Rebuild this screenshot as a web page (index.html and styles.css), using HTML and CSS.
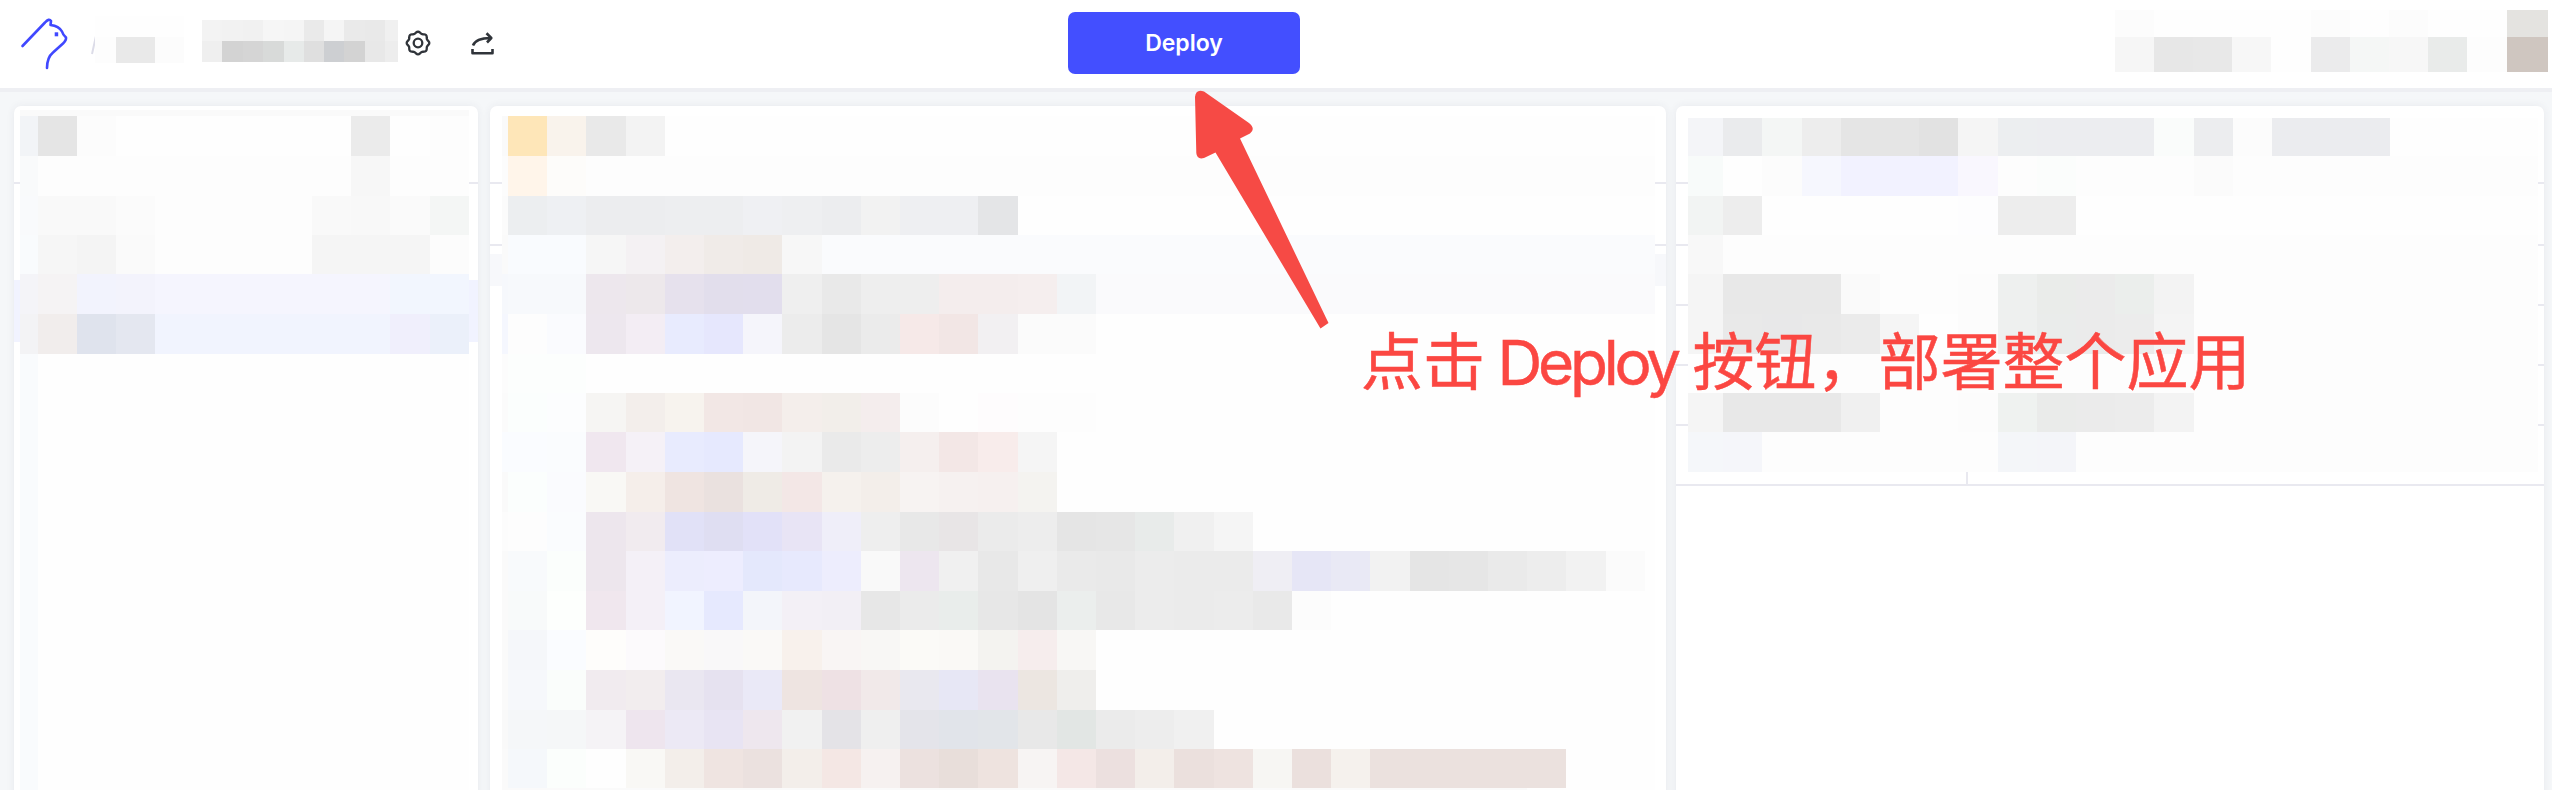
FILE: index.html
```html
<!DOCTYPE html>
<html lang="zh">
<head>
<meta charset="utf-8">
<title>Deploy</title>
<link rel="stylesheet" href="styles.css">
</head>
<body>
<div class="app">
  <header class="topbar">
    <div class="topbar-left">
      <svg class="logo" width="48" height="54" viewBox="20 17 48 54"><path d="M22.5 46 45 22.5Q49 18 51 21L50.5 25Q59 26 62 31.500Q63 35 66 37.500Q66.500 40 63 43.500L53 52.500Q47 57.500 47 68"/><rect x="54.700" y="32.300" width="3.500" height="4"/></svg>
      <svg class="slash" width="8" height="22" viewBox="0 0 8 22"><path d="M6 1 2 19"/></svg>
      <div class="mosaic crumb" data-mosaic="crumb"></div>
      <div class="mosaic name" data-mosaic="name"></div>
      <svg class="icon gear" width="26" height="26" viewBox="-13 -13 26 26"><path id="gear-edge"/><circle r="4.300"/></svg>
      <svg class="icon share" width="24" height="26" viewBox="0 0 24 26"><path d="M2 14.500Q5 7 19.500 7M15.500 2.300 20.300 7 16 11.500M1.500 18V22.200H21.500V18"/></svg>
    </div>
    <button class="deploy">Deploy</button>
    <div class="mosaic account" data-mosaic="account"></div>
  </header>
  <main class="panels">
    <section class="panel panel-files">
      <div class="rule rule-1"></div><div class="band band-files"></div>
      <div class="mosaic files" data-mosaic="files"></div>
    </section>
    <section class="panel panel-code">
      <div class="rule rule-1"></div><div class="rule rule-2"></div><div class="band band-code"></div>
      <div class="mosaic code" data-mosaic="code"></div>
    </section>
    <section class="panel panel-info">
      <div class="rule rule-1"></div><div class="rule rule-2"></div><div class="rule rule-3"></div><div class="rule rule-4"></div><div class="rule rule-5"></div><div class="rule rule-6"></div><div class="divider"></div>
      <div class="mosaic info" data-mosaic="info"></div>
    </section>
  </main>
  <svg class="arrow" width="140" height="245" viewBox="1192 87 140 245"><path d="M1195 97Q1196 88.500 1204 91.500L1249 123Q1256 129 1250 133.500L1240 138.500 1328.500 323 1320.500 328.500 1215.500 152.500 1204 158Q1197 160 1196.300 153Z"/></svg>
  <div class="note"><span class="note-a">点击</span><span class="note-b">Deploy</span><span class="note-c">按钮，部署整个应用</span></div>
</div>
<script src="mosaic.js"></script>
</body>
</html>
```

FILE: styles.css
```css
* { box-sizing: border-box; }
body { margin: 0; background: #f5f7f9; overflow: hidden; }
.app { position: relative; width: 2552px; height: 790px; overflow: hidden; display: flex; flex-direction: column; }
.topbar { height: 92px; flex: none; background: #fff; border-bottom: 4px solid #eeeff3; display: grid; grid-template-columns: 1068px 232px 1fr; align-items: start; }
.topbar-left { display: flex; align-items: flex-start; padding-left: 20px; }
.logo { margin-top: 17px; fill: none; stroke: #4048ff; stroke-width: 2.6; stroke-linecap: round; stroke-linejoin: round; }
.logo rect { fill: #4048ff; stroke: none; }
.slash { margin: 35px 0 0 22px; fill: none; stroke: #dcdce8; stroke-width: 2; }
.crumb { margin: 16px 0 0 -3px; }
.name { margin: 20px 0 0 18px; }
.icon { fill: none; stroke: #30343a; stroke-width: 2.3; }
.gear { margin: 30px 0 0 7px; }
.share { margin: 31px 0 0 40px; stroke-width: 2.6; stroke-linejoin: round; }
.deploy { margin: 12px 0 0; width: 232px; height: 62px; padding: 0 0 1px; border: 0; border-radius: 7px; background: #434fff; color: #fff; font: 600 23px Inter, sans-serif; }
.account { margin: 10px 0 0 815px; }
.panels { flex: 1; display: grid; grid-template-columns: 464px 1176px 868px; column-gap: 12px; padding: 14px 0 0 14px; }
.panels { grid-template-columns: 464px 1176px 868px; column-gap: 0; }
.panel { position: relative; background: #fff; border-radius: 7px 7px 0 0; height: 700px; box-shadow: 0 0 8px rgba(50, 60, 80, 0.07); }
.panel-code { margin-left: 12px; margin-right: -12px; }
.panel-info { margin-left: 22px; margin-right: -22px; }
.mosaic { display: grid; width: max-content; }
.files { padding: 4px 0 0 6px; position: relative; }
.code { padding: 10px 0 0 12px; position: relative; }
.info { padding: 12px 0 0 12px; position: relative; }
.rule { position: absolute; left: 0; right: 0; height: 2px; background: #e9e9f0; }
.rule-1 { top: 76px; }
.rule-2 { top: 138px; }
.rule-3 { top: 198px; }
.rule-4 { top: 258px; }
.rule-5 { top: 318px; }
.rule-6 { top: 378px; }
.band { position: absolute; left: 0; right: 0; }
.band-files { top: 174px; height: 62px; background: #f1f3ff; }
.band-code { top: 148px; height: 32px; background: #f7f8fb; }
.divider { position: absolute; left: 290px; top: 366px; width: 2px; height: 12px; background: #e9e9f0; }
.arrow { position: absolute; left: 1192px; top: 87px; fill: #f64a45; }
.note { position: absolute; left: 1361px; top: 318px; height: 90px; line-height: 90px; display: flex; white-space: nowrap; color: #fb4742; font-family: Inter, "Noto Sans CJK SC", sans-serif; font-size: 62px; -webkit-text-stroke: 0.500px #fb4742; }
.note-a { width: 136.500px; }
.note-b { width: 195px; letter-spacing: -4.200px; }
```

FILE: mosaic.js
```js
// Tokens are "grey" (2 digits) or "rrggbb", with an optional "*count".
const xs = (first, from, to, last) => {
  const e = first === null ? [] : [first];
  for (let k = from; k <= to; k++) e.push(Math.round(39.2 * k - 1.6));
  if (last) e.push(last);
  return e;
};
const ys = [116, 156, 196, 235, 274, 314, 354, 393, 432, 472, 512, 551, 591, 630, 670, 710, 749, 788, 790];

const mosaics = {
  crumb: { x: [95, 116, 155, 184], y: [16, 37, 63], fill: "fe", rows: ["fe*3", "fd e9 fc"] },
  name: {
    x: [202, 222, 243, 263, 284, 304, 324, 344, 365, 385, 398], y: [20, 41, 62], fill: "f3",
    rows: ["f3 f2 f1 f6 f5 ea f5 ea e9 f0", "ef d3 d5 d8dad9 e7eae9 df cdcfd2 d3 e8 ed"]
  },
  account: {
    x: [2115, 2154, 2193, 2232, 2271, 2311, 2350, 2389, 2428, 2467, 2507, 2548], y: [10, 37, 72], fill: "fe",
    rows: ["fc fe*4 fc fe fc fe fe e4e3e0", "f6 e7 e8 f7 fe ebebec f5f7f6 f7 e9ebea fd cfc6c0"]
  },
  files: {
    x: xs(20, 1, 12), y: [110, ...ys], fill: "fe",
    rows: [
      "fa*12",
      "f2f4f7 e5 fc fe*6 eb fe fd",
      "f9fafb fd*8 f7 fd fd",
      "f9fafc f9 f9 fb fd*4 f9 f8 fa f4f6f5",
      "f9fbfd f6 f4 fa fd*4 f5*3 fc",
      "f4f4f8 f5f3f4 f2f3fd f3f3fc f5f5fe*6 f2f6fe*2",
      "f3f3f5 f1edec dfe3ed e4e7f0 f1f4fe*6 f0effc ebf0fa",
      ...Array(12).fill("f9fbfd")
    ]
  },
  code: {
    x: xs(502, 13, 42, 1655), y: ys, fill: "fe",
    rows: [
      "fa fee6b8 f9f3ec e9 f3",
      "fc fff5ea fdfcfa fd fd fd*27",
      "fb eceef0 eef0f3 ecedef*2 edeef0*2 eff0f3 eeeff1 ecedef f2 eeeff2*2 e4e5e7",
      "fa f9fbfe*2 f6 f4f1f3 f3eeed f0ebe8 efeae6 f7 fafbfd*23",
      "f6f8fc f7f9fc*2 ede7ed ede8eb e6e1ed e2deec e2deed ef e9 ee ee f4eded*2 f5eeee f2f4f6 fafafc*16",
      "f5f7fe fd fafbfe ede7ee f3edf4 e8ebfe e6e7fd f5f5fb ec e5 eb f6e9e8 f2e6e5 f2f0f2 fb fb",
      "fc fcfefd*2",
      "fb fbfefd fcfdfe f6f5f3 f3eeeb f7f3ee f2e7e5 f1e6e4 f4eeeb f2eeea f4eded fc fe fefcfd fd fd",
      "fafcff fafcff fafcfe f0e7ef f5f1f7 e8ebfe e6e9fe f5f5fa f3 ea ed f5efee f3e7e6 f8eceb f5",
      "fa fbfefd fafbfe f9f8f5 f5eeea efe4e1 eae1df efebe6 f3e7e6 f5f1ed f3eeea f7f3f2 f6f1f0 f6f0ef f4f3f0",
      "fc fd fafcfe ede6ed f1ebef e1e1f7 dfdef2 e2e1f8 e8e4f5 efeef9 ee e8 e8e5e6 eb ed e5 e6 e8ebea f0 f5",
      "fa f8fafc fbfefc ede6ed f4f0f7 ecedfd ededfe e4e8fc e7e9fd ededfd f9 ede6ef f0 e8 ef ea e9 ec eb eb efeef4 e6e6f6 e9e9f5 f2 e5 e6 ea ed f2 fb",
      "fa f8fafa fdfffd f0e7ee f4f0f7 f1f4ff e6e9fe f3f5fa f3f0f6 f2eff5 e7 eb e9edeb e7 e4 ebeeed e8 ec eb ec e9 fc",
      "fa f5f7fa fafcff fefdfb fcfafc faf9f7 f9f8f9 faf9f7 f8f1ec f9f5f4 f8f7f5 fbfaf7 faf9f6 f4f3f0 f6eded f8f7f5",
      "fa f6f8fb fafdfb f1ebef f2edee eae7f1 e6e2f0 eae9f7 eee4e1 eee1e4 f1e9e9 e9e8ef e7e7f5 e9e3ef ece6e1 efeeec",
      "f9 f5f7f9 f5f7f8 f5f3f6 eee5ee ece9f5 e8e4f3 eee7ee f1 e4e3e7 ef e4e4ea e1e4ea e2e5e9 e8 e2e6e4 eb ed f0",
      "fa f5f8fb fbfefc fe f9f8f5 f3eeea efe4e1 ebe1df f3eeea f4e7e4 f6f1f0 ece1df e8deda eee3df f7f4f3 f4e7e6 ece0df f3eeea ebe0dd eee3e0 f7f6f3 ebe0dd f5f1ed ebe1de*5",
      "fa*27"
    ]
  },
  info: {
    x: xs(1688, 44, 64, 2538), y: [118, ...ys.slice(1, 10)], fill: "fe",
    rows: [
      "f4f5f8 eaebed f4f6f5 ed e5 e5 e2 f5 eceef0 ecedf0*3 fafcfb ecedef fc ebecef*3",
      "f8fbfa fe fc f6f7fe f2f2ff*3 f9f7fe fd fbfdfc fd*3 fb fd*8",
      "f2f4f3 ed fe*5 fdfdfe ed ed",
      "f8 fd*21",
      "f5 e8*3 fa fd fd fc eef0ef eaecea eb ebeeec f3 fd*9",
      "f5 e9 e8e8e9 e9 eb f5 fe fc eef0ef eaeceb eb ec f4 fd*9",
      "fe fd*21",
      "f5 e8*3 f0 fd fd fc eff2f0 eaebea eb ec f3 fd*9",
      "f5f7fa f5f6fa fd*6 f4f6f9 f4f5f9 fd*12"
    ]
  }
};

const colour = t => "#" + (t.length === 2 ? t + t + t : t);

document.querySelectorAll("[data-mosaic]").forEach(el => {
  const m = mosaics[el.dataset.mosaic];
  const sizes = e => e.slice(1).map((v, i) => v - e[i] + "px").join(" ");
  el.style.gridTemplateColumns = sizes(m.x);
  el.style.gridTemplateRows = sizes(m.y);
  m.rows.forEach(row => {
    const cells = row.split(" ").flatMap(t => {
      const [c, n] = t.split("*");
      return Array(Number(n || 1)).fill(c);
    });
    for (let i = 0; i < m.x.length - 1; i++) {
      const cell = document.createElement("i");
      cell.style.background = colour(cells[i] || m.fill);
      el.append(cell);
    }
  });
});

// Gear outline: eight shallow lobes around the hub.
let d = "";
for (let a = 0; a < 360; a += 5) {
  const r = 10.5 + 0.8 * Math.cos(a * 8 * Math.PI / 180);
  const t = a * Math.PI / 180;
  d += (a ? "L" : "M") + (r * Math.sin(t)).toFixed(2) + " " + (-r * Math.cos(t)).toFixed(2);
}
document.getElementById("gear-edge").setAttribute("d", d + "Z");
```
